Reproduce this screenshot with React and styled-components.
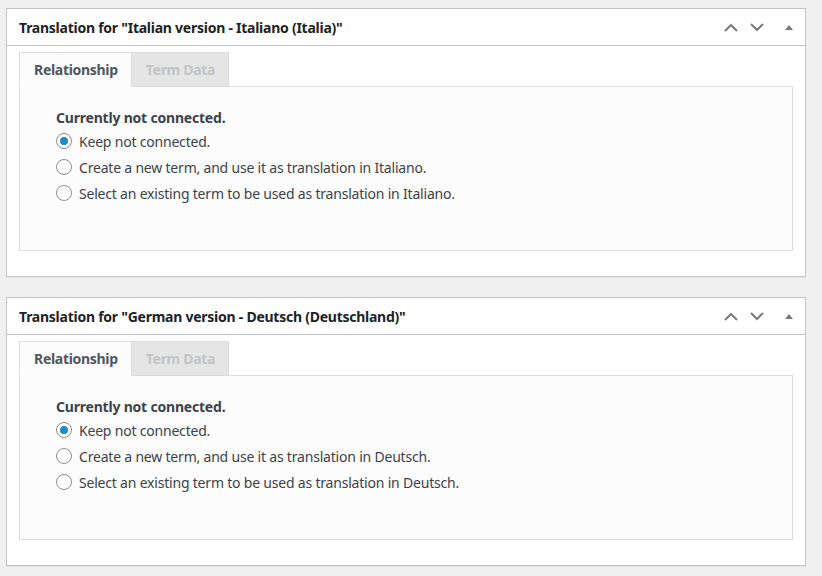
import React from "react";
import styled, { createGlobalStyle } from "styled-components";

const GlobalStyle = createGlobalStyle`
  html, body {
    margin: 0;
    padding: 0;
    background: #f0f0f1;
    font-family: "Noto Sans", "Open Sans", sans-serif;
    color: #3c434a;
  }
`;

const Page = styled.div`
  padding: 8px 16px 0 6px;
  width: 800px;
`;

const Box = styled.div`
  background: #fff;
  border: 1px solid #c3c4c7;
  box-shadow: 0 1px 1px rgba(0, 0, 0, 0.04);
  margin-bottom: 20px;
  padding-bottom: 25px;
`;

const Header = styled.div`
  display: flex;
  align-items: center;
  height: 36px;
  border-bottom: 1px solid #c3c4c7;
  padding: 0 3px 0 12px;
`;

const Title = styled.h2`
  flex: 1;
  margin: 0;
  font-size: 14px;
  font-weight: 700;
  color: #1d2327;
  letter-spacing: -0.25px;
`;

const Handle = styled.button`
  border: 0;
  background: none;
  width: 26px;
  height: 36px;
  padding: 0;
  margin-left: ${(p) => (p.$gap ? "6px" : "0")};
  display: flex;
  align-items: center;
  justify-content: center;
  color: #787c82;
`;

const Inner = styled.div`
  padding: 6px 12px 0 12px;
`;

const TabRow = styled.div`
  display: flex;
  margin-bottom: -1px;
  position: relative;
`;

const Tab = styled.div`
  padding: 0 13px 0 14px;
  height: 35px;
  box-sizing: border-box;
  display: flex;
  align-items: center;
  font-size: 14px;
  font-weight: 700;
  letter-spacing: -0.3px;
  border: 1px solid #dcdcde;
  border-bottom: ${(p) => (p.$active ? "1px solid #fcfcfc" : "1px solid #dcdcde")};
  background: ${(p) => (p.$active ? "#fcfcfc" : "#e5e5e5")};
  color: ${(p) => (p.$active ? "#50575e" : "#c3c4c7")};
  & + & {
    border-left: 0;
  }
`;

const Panel = styled.div`
  background: #fcfcfc;
  border: 1px solid #dcdcde;
  height: 165px;
  box-sizing: border-box;
  padding: 21px 36px 0;
`;

const Lead = styled.p`
  margin: 0 0 1px;
  font-size: 14px;
  font-weight: 700;
  color: #3c434a;
  letter-spacing: -0.2px;
`;

const Option = styled.label`
  display: flex;
  align-items: center;
  gap: 7px;
  height: 26px;
  font-size: 14px;
  color: #3c434a;
  letter-spacing: -0.2px;
`;

const Radio = styled.span`
  width: 16px;
  height: 16px;
  box-sizing: border-box;
  border-radius: 50%;
  border: 1px solid #8c8f94;
  background: #fff;
  display: flex;
  align-items: center;
  justify-content: center;
  flex-shrink: 0;
  &::after {
    content: "";
    width: 8px;
    height: 8px;
    border-radius: 50%;
    background: #1e8cbe;
    display: ${(p) => (p.$checked ? "block" : "none")};
  }
`;

const Chevron = ({ up }) => (
  <svg width="14" height="9" viewBox="0 0 14 9">
    <path
      d={up ? "M1 8 L7 2 L13 8" : "M1 1 L7 7 L13 1"}
      fill="none"
      stroke="currentColor"
      strokeWidth="2"
    />
  </svg>
);

const Caret = () => (
  <svg width="10" height="7" viewBox="0 0 10 7">
    <path d="M1 6 L5 1 L9 6 Z" fill="currentColor" />
  </svg>
);

function TranslationBox({ title, lang }) {
  const options = [
    "Keep not connected.",
    `Create a new term, and use it as translation in ${lang}.`,
    `Select an existing term to be used as translation in ${lang}.`,
  ];
  return (
    <Box>
      <Header>
        <Title>{title}</Title>
        <Handle aria-label="Move up">
          <Chevron up />
        </Handle>
        <Handle aria-label="Move down">
          <Chevron />
        </Handle>
        <Handle aria-label="Toggle panel" $gap>
          <Caret />
        </Handle>
      </Header>
      <Inner>
        <TabRow>
          <Tab $active>Relationship</Tab>
          <Tab>Term Data</Tab>
        </TabRow>
        <Panel>
          <Lead>Currently not connected.</Lead>
          {options.map((o, i) => (
            <Option key={o}>
              <Radio $checked={i === 0} />
              {o}
            </Option>
          ))}
        </Panel>
      </Inner>
    </Box>
  );
}

export default function App() {
  return (
    <>
      <GlobalStyle />
      <Page>
        <TranslationBox
          title={'Translation for "Italian version - Italiano (Italia)"'}
          lang="Italiano"
        />
        <TranslationBox
          title={'Translation for "German version - Deutsch (Deutschland)"'}
          lang="Deutsch"
        />
      </Page>
    </>
  );
}
